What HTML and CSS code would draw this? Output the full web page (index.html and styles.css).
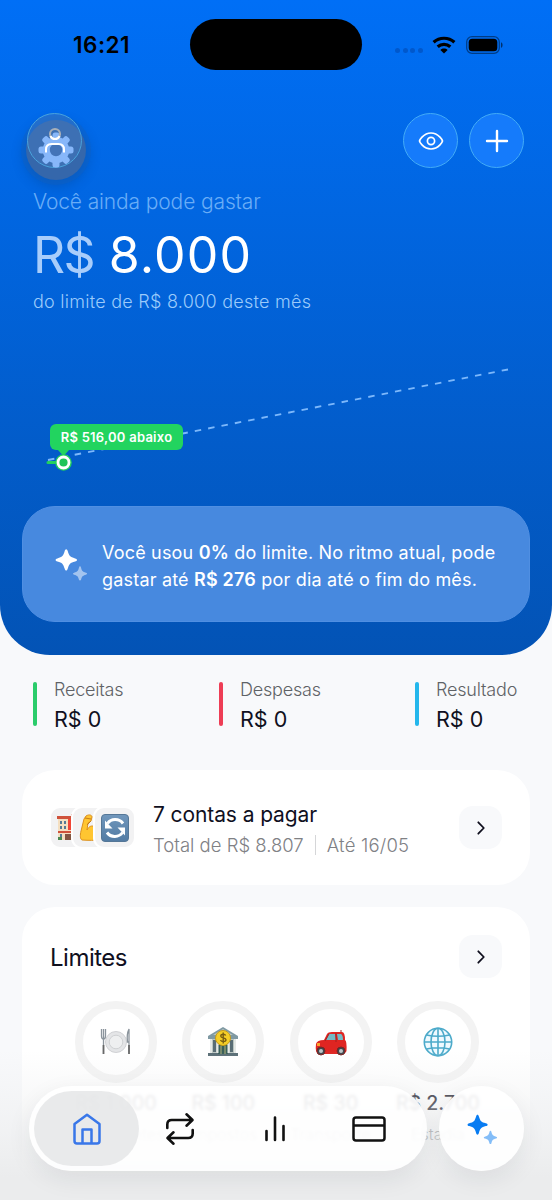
FILE: index.html
```
<!DOCTYPE html>
<html lang="pt-BR">
<head>
<meta charset="utf-8">
<meta name="viewport" content="width=device-width">
<title>Finanças</title>
<link rel="stylesheet" href="styles.css">
</head>
<body>
<svg width="0" height="0" class="defs">
  <symbol id="sparkles" viewBox="0 0 32 32"><path d="M11.2.8c.7 0 1.1.7 1.5 1.8 1.5 5 2.4 5.900 7.400 7.300 1.100.3 1.900.7 1.900 1.500s-.8 1.200-1.900 1.500c-5 1.400-5.900 2.300-7.400 7.400-.4 1.100-.8 1.800-1.500 1.800s-1.200-.7-1.500-1.800c-1.500-5.100-2.400-6-7.300-7.400C1.300 12.600.6 12.200.6 11.400s.7-1.200 1.800-1.500c4.900-1.400 5.800-2.300 7.300-7.300C10 1.500 10.500.8 11.200.8Z"/><path opacity=".5" d="M25 17.800c.5 0 .8.5 1 1.200.9 3.600 1.500 4.200 5 5.200.7.200 1.100.5 1.100 1s-.4.800-1.100 1c-3.500 1-4.100 1.600-5 5.100-.2.700-.5 1.100-1 1.100s-.8-.4-1-1.100c-.9-3.500-1.500-4.100-4.900-5.100-.7-.2-1.200-.5-1.200-1s.5-.8 1.200-1c3.400-1 4-1.600 4.900-5.200.2-.7.500-1.200 1-1.200Z"/></symbol>
  <symbol id="chevron" viewBox="0 0 16 16"><path d="M5.300 2.300 10.800 8l-5.500 5.700" fill="none" stroke="currentColor" stroke-width="1.800" stroke-linecap="round" stroke-linejoin="round"/></symbol>
</svg>
<main class="screen">
  <section class="hero">
    <div class="status">
      <span class="time">16:21</span>
      <span class="island"></span>
      <div class="signals">
        <span class="dots"><i></i><i></i><i></i><i></i></span>
        <svg class="wifi" viewBox="0 0 24 18"><g fill="none" stroke="#000" stroke-width="3.200"><path d="M1.600 6.300C7.500.9 16.500.9 22.400 6.300"/><path d="M5.700 10.800c3.600-3.300 9-3.300 12.600 0"/></g><path d="M8.400 13.900c2-1.900 5.200-1.900 7.200 0L12 17.600Z"/></svg>
        <svg class="battery" viewBox="0 0 38 18"><rect x=".7" y=".7" width="32.600" height="16.600" rx="5.300" fill="none" stroke="#000" stroke-opacity=".45" stroke-width="1.200"/><rect x="2.700" y="2.700" width="28.600" height="12.600" rx="3.500"/><path d="M35 6.200c2.100.7 2.100 4.900 0 5.600Z" fill-opacity=".55"/></svg>
      </div>
    </div>
    <div class="actions">
      <div class="profile">
        <span class="ghost"></span><span class="round dim"></span>
        <svg class="gear" viewBox="0 0 40 48">
          <g fill="#87b7fa"><circle cx="20" cy="28" r="13.200"/><rect x="16.500" y="10.500" width="7" height="35" rx="2.500"/><rect x="16.500" y="10.500" width="7" height="35" rx="2.500" transform="rotate(45 20 28)"/><rect x="16.500" y="10.500" width="7" height="35" rx="2.500" transform="rotate(90 20 28)"/><rect x="16.500" y="10.500" width="7" height="35" rx="2.500" transform="rotate(135 20 28)"/></g>
          <circle cx="20" cy="28" r="6.200" fill="#4474b8"/>
          <circle cx="19" cy="12" r="5" fill="none" stroke="#a8afb8" stroke-width="2.100"/>
          <path d="M14.400 14a5 5 0 0 0 9.200 0" fill="none" stroke="#fff" stroke-width="2"/>
          <path d="M10 30.500v-3q0-5.500 5.500-5.500h7q5.500 0 5.500 5.500v3" fill="none" stroke="#fff" stroke-width="2"/>
        </svg>
      </div>
      <div class="round"><svg width="26" height="20" viewBox="0 0 26 20" fill="none" stroke="#fff" stroke-width="1.700"><path d="M1.500 10Q2 8.200 4 6.100 8 2 13 2t9 4.100Q24 8.200 24.500 10 24 11.800 22 13.900 18 18 13 18t-9-4.100Q2 11.800 1.500 10Z"/><circle cx="13" cy="10" r="3.600"/></svg></div>
      <div class="round"><svg width="24" height="24" viewBox="0 0 24 24" fill="none" stroke="#fff" stroke-width="2.400" stroke-linecap="round"><path d="M12 2v20M2 12h20"/></svg></div>
    </div>
    <p class="lead">Você ainda pode gastar</p>
    <p class="amount"><span class="cur">R$</span> <span class="num">8.000</span></p>
    <p class="sub">do limite de R$ 8.000 deste mês</p>
    <div class="chart">
      <svg width="552" height="130" viewBox="0 350 552 130" fill="none">
        <path d="M48 460 508 369.500" stroke="#7db8fb" stroke-width="1.800" stroke-dasharray="6.500 7.100"/>
        <path d="M48 462.500h16" stroke="#22d15d" stroke-width="3" stroke-linecap="round"/>
        <path d="m57 449 6.500 7 6.500-7Z" fill="#22d45f"/>
        <circle cx="63.500" cy="462.500" r="8.300" fill="#22d15d"/><circle cx="63.500" cy="462.500" r="5.500" fill="#1fc459" stroke="#fff" stroke-width="2.800"/>
      </svg>
      <span class="tip">R$ 516,00 abaixo</span>
    </div>
    <div class="insight">
      <svg class="spark" viewBox="0 0 32 32" fill="#fff"><use href="#sparkles"/></svg>
      <p>Você usou <b>0%</b> do limite. No ritmo atual, pode<br>gastar até <b>R$ 276</b> por dia até o fim do mês.</p>
    </div>
  </section>

  <section class="stats">
    <div class="stat green"><span>Receitas</span><strong>R$ 0</strong></div>
    <div class="stat red"><span>Despesas</span><strong>R$ 0</strong></div>
    <div class="stat cyan"><span>Resultado</span><strong>R$ 0</strong></div>
  </section>

  <section class="card bills">
    <div class="stack">
      <div class="tile"><svg width="30" height="30" viewBox="0 0 30 30"><path fill="#f4dfc1" d="M2 6h15v21H2zM15 3h13v24H15z"/><path fill="#cf523b" d="M1 3h15v3H1zM2 18h15v2H2zM15 1h14v3H15z"/><path fill="#577a94" d="M4 8h2v3H4zM8 8h2v3H8zM4 13h2v3H4zM8 13h2v3H8zM4 21h2v3H4z"/><path fill="#f04636" d="M12 6h3v11h-3zM15 10h5v3h-5z"/><path fill="#825542" d="M9 21h6v6H9z"/><path fill="#4b8a51" d="M2 24h4v3H2z"/></svg></div>
      <div class="tile"><svg width="30" height="30" viewBox="0 0 30 30"><path d="M8 3c3-2 6-1 6 1l-1 4-3 2-1 7c2-4 5-5 8-3 6 1 10 4 10 9 0 4-9 5-23 4-2-1-2-5-1-9L6 6Z" fill="#ffc531" stroke="#dc901c"/><path d="m7 5 6 1M9 12l4-4" stroke="#c67b18" fill="none"/></svg></div>
      <div class="tile"><svg width="30" height="30" viewBox="0 0 30 30"><defs><linearGradient id="steel" x2="0" y2="1"><stop stop-color="#7197bc"/><stop offset="1" stop-color="#527ba3"/></linearGradient></defs><rect x="1.500" y="1.500" width="27" height="27" rx="3.500" fill="url(#steel)" stroke="#557797"/><path d="M7.500 10.500C11 5.500 19 5 23 10.500M22.500 19.500C19 24.500 11 25 7 19.500" fill="none" stroke="#fff" stroke-width="3"/><path d="M5 7.500v8h7.500ZM25 22.500v-8h-7.500Z" fill="#fff"/></svg></div>
    </div>
    <div class="bill-text"><h2>7 contas a pagar</h2><p><span>Total de R$ 8.807</span><i></i><span class="until">Até 16/05</span></p></div>
    <span class="go"><svg width="16" height="16"><use href="#chevron"/></svg></span>
  </section>

  <section class="card limits">
    <header><h2>Limites</h2><span class="go"><svg width="16" height="16"><use href="#chevron"/></svg></span></header>
    <div class="rings">
      <div class="limit"><div class="ring"><svg width="32" height="30" viewBox="0 0 32 30"><circle cx="16" cy="15" r="10.500" fill="#e4e5e7" stroke="#d0d1d4"/><circle cx="16" cy="15" r="6.800" fill="#eeeff0" stroke="#cfd1d3"/><path d="M1.500 2v7q0 3 2 3t2-3V2M3.500 2v25M29 27V2q-2.500 5-1.500 13H29" fill="none" stroke="#8b949c" stroke-width="1.300"/><path d="M3.500 18v9M29 18v9" stroke="#666" stroke-width="1.700"/></svg></div><b>R$ 1.000</b><span>Restaurantes</span></div>
      <div class="limit"><div class="ring"><svg width="32" height="30" viewBox="0 0 32 30"><path fill="#7f99a3" d="M16 0 31 9v3H1V9Z"/><path fill="#bac5c1" d="m16 2 10 6H6ZM3 12h26v14H3z"/><path fill="#596d75" d="M6 13h3v12H6zM23 13h3v12h-3zM1 26h30v3H1z"/><path fill="#385e58" d="M11 18h10v9H11z"/><path d="M14 19v8M18 19v8" stroke="#b5b37b"/><path d="M4 12v14M10.500 12v14M21.500 12v14M28 12v14" stroke="#e5e9e6" stroke-width="2"/><circle cx="16" cy="11" r="7.500" fill="#f5ce26" stroke="#c59b18"/><path d="M18.700 8.500c-1-2-5-1.500-5 .6 0 2.500 5.300 1.200 5.300 3.700 0 2.300-4.500 2.400-5.500.2M16.200 5.500v11" stroke="#785d11" stroke-width="1.400" fill="none"/></svg></div><b>R$ 100</b><span>Impostos</span></div>
      <div class="limit"><div class="ring"><svg width="32" height="30" viewBox="0 0 32 30"><path fill="#df2522" d="M1 17q1-4 8-4l3-6q1-2 5-2h10q3 0 3 8 2 1 1.500 11-1 3-5 3H3q-3-2-2-10Z"/><path fill="#74bac5" d="m11 13 3-6h6l1 6ZM22 7h4q2 1 2 6h-5Z"/><path d="m14 7-4 7M21 6v9M26 5V3" stroke="#a5211f"/><path fill="#faa32c" d="M2 16h3v3H2z"/><g fill="#3f454b" stroke="#7a2321"><circle cx="6" cy="24" r="4"/><circle cx="26" cy="24" r="4"/></g><g fill="#bec7ca"><circle cx="6" cy="24" r="2"/><circle cx="26" cy="24" r="2"/></g></svg></div><b>R$ 30</b><span>Transporte</span></div>
      <div class="limit"><div class="ring"><svg width="32" height="32" viewBox="0 0 32 32" fill="none" stroke="#4caaca" stroke-width="1.600"><circle cx="16" cy="16" r="13.700" fill="#effaff"/><ellipse cx="16" cy="16" rx="7" ry="13.700"/><path d="M16 2v28M2 16h28M4.500 9q11.500 2.500 23 0M4.500 23q11.500-2.500 23 0"/></svg></div><b>R$ 2.700</b><span>Estadia</span></div>
    </div>
  </section>

  <div class="fade"></div>
  <nav class="dock">
    <div class="tabs">
      <a class="tab active"><svg width="30" height="32" viewBox="0 0 30 32" fill="none" stroke="#3977e9" stroke-width="2.500" stroke-linejoin="round"><path d="M15 1.800 27.500 11v17q0 2.500-2.500 2.500H5Q2.500 30.500 2.500 28V11Z"/><path d="M10.500 30V16.500h9V30"/></svg></a>
      <a class="tab"><svg width="30" height="34" viewBox="0 0 30 34" fill="none" stroke="#111" stroke-width="2.600" stroke-linecap="round" stroke-linejoin="round"><path d="M2.300 16v-3.500q0-4.500 4.500-4.500H27M21.500 2.300 27.500 8l-6 5.700M27.700 18v3.500q0 4.500-4.500 4.500H3M8.500 20.300 2.500 26l6 5.700"/></svg></a>
      <a class="tab"><svg width="24" height="28" viewBox="0 0 24 28" fill="none" stroke="#111" stroke-width="2.600" stroke-linecap="round"><path d="M3.500 16v9M12 2.500V25M20.500 11v14"/></svg></a>
      <a class="tab"><svg width="34" height="26" viewBox="0 0 34 26" fill="none" stroke="#111" stroke-width="2.500"><rect x="1.500" y="1.500" width="31" height="23" rx="2.500"/><path d="M2 9.500h30"/></svg></a>
    </div>
    <a class="assistant"><svg width="30" height="30" viewBox="0 0 32 32" fill="#087cf2"><use href="#sparkles"/></svg></a>
  </nav>
</main>
</body>
</html>
```

FILE: styles.css
```
* { box-sizing: border-box; }
body, p, h2 { margin: 0; }
body { width: 552px; height: 1200px; overflow: hidden; background: #f8f9fb; font-family: Inter, "Liberation Sans", sans-serif; color: #10101e; }
svg { display: block; flex: none; }
.defs { position: absolute; }
.screen { position: relative; height: 1200px; overflow: hidden; }
.hero { height: 655px; border-radius: 0 0 50px 50px; background: linear-gradient(#006ff6, #0353b5); overflow: hidden; }
.status { display: grid; grid-template-columns: 190px 172px 190px; height: 113px; padding-top: 19px; }
.time { padding: 13px 0 0 73px; color: #000; font-size: 22.5px; line-height: 26px; font-weight: 600; letter-spacing: .5px; }
.island { height: 51px; border-radius: 26px; background: #000; }
.signals { display: flex; align-items: center; height: 51px; padding-left: 33px; }
.dots { display: flex; gap: 2.500px; width: 36px; padding-top: 12px; }
.dots i { width: 5px; height: 5px; border-radius: 50%; background: #0058cc; }
.wifi { width: 24px; height: 18px; margin-left: 1px; }
.battery { width: 38px; height: 18px; margin-left: 10px; }
.actions { display: flex; gap: 11px; height: 74px; padding: 0 28px 0 22px; }
.round { display: flex; align-items: center; justify-content: center; width: 55px; height: 55px; border-radius: 50%; background: #157bfb; border: 1px solid #43acf7; }
.profile { position: relative; width: 68px; margin-right: auto; }
.ghost { position: absolute; left: 4px; top: 7px; width: 60px; height: 60px; border-radius: 50%; background: #3567ab; box-shadow: 0 0 0 5px #1561be66, 0 4px 12px 3px #073d8450; }
.dim { position: absolute; left: 5px; top: 0; background: #4a80c366; border-color: #4aa3dc; }
.gear { position: absolute; left: 14px; top: 9px; width: 40px; height: 48px; }
.lead { height: 38px; padding-left: 33px; font-size: 21px; line-height: 30px; font-weight: 300; letter-spacing: -.13px; color: #69adf7; }
.amount { display: flex; gap: 15px; height: 64px; padding-left: 33px; font-size: 50px; line-height: 61px; font-weight: 400; color: #fff; }
.cur { letter-spacing: -1.800px; color: #a8cdfb; }
.num { letter-spacing: 1.200px; }
.sub { height: 61px; padding-left: 33px; font-size: 18px; line-height: 26px; font-weight: 300; letter-spacing: .26px; color: #9ccbfb; }
.chart { position: relative; height: 130px; }
.tip { position: absolute; left: 50px; top: 74px; width: 133px; height: 26px; border-radius: 6px; background: #22d45f; color: #fff; font-size: 13px; line-height: 27px; font-weight: 600; letter-spacing: .25px; text-align: center; white-space: nowrap; }
.insight { display: flex; gap: 15px; width: 508px; height: 116px; margin: 26px 22px 0; padding: 32px 0 0 32px; border-radius: 33px; background: #4789df; border: 1px solid #508fe2; color: #fff; font-size: 18px; line-height: 27px; letter-spacing: .19px; white-space: nowrap; }
.spark { width: 32px; height: 33px; margin-top: 9px; }
.insight b { font-weight: 600; }
.stats { display: flex; height: 116px; padding: 23px 0 0 33px; }
.stat { position: relative; flex: none; width: 186px; padding-left: 21px; white-space: nowrap; }
.stat:nth-child(2) { width: 196px; }
.stat:nth-child(3) { width: 137px; }
.stat::before { content: ""; position: absolute; left: 0; top: 4px; width: 4px; height: 44px; border-radius: 2px; background: currentColor; }
.stat span, .stat strong { display: block; }
.stat span { color: #5f6266; font-size: 18px; line-height: 24px; font-weight: 300; letter-spacing: -.2px; }
.stat strong { margin-top: 2px; color: #10101e; font-size: 21.500px; line-height: 30px; font-weight: 400; }
.green { color: #2bcc6b; } .red { color: #ee3d55; } .cyan { color: #24b7ec; }
.card { width: 508px; margin: 0 22px; border-radius: 33px; background: #fff; }
.bills { display: flex; height: 115px; margin-top: -1px; padding: 0 28px 0 27px; align-items: center; white-space: nowrap; }
.stack { display: flex; width: 104px; }
.tile { display: flex; align-items: center; justify-content: center; width: 43px; height: 43px; margin-right: -21px; border: 2px solid #fff; border-radius: 11px; background: #f2f2f3; flex: none; }
.bill-text { flex: 1; padding-top: 4px; }
.bill-text h2 { font-size: 21px; line-height: 31px; font-weight: 400; letter-spacing: -.1px; }
.bill-text p { display: flex; align-items: center; height: 31px; color: #808185; font-size: 18.500px; font-weight: 300; }
.bill-text i { width: 1px; height: 20px; margin: 0 11px; background: #d5d6d8; }
.until { letter-spacing: .2px; }
.go { display: flex; align-items: center; justify-content: center; width: 43px; height: 43px; border-radius: 14px; background: #f8f9fb; color: #10101e; flex: none; }
.limits { height: 320px; margin-top: 22px; padding: 28px 28px; }
.limits header { display: flex; justify-content: space-between; height: 66px; }
.limits h2 { font-size: 24px; line-height: 46px; font-weight: 400; letter-spacing: -.5px; }
.rings { display: flex; gap: 25.300px; padding-left: 25px; width: 480px; }
.limit { width: 82px; flex: none; display: flex; flex-direction: column; align-items: center; white-space: nowrap; }
.ring { display: flex; align-items: center; justify-content: center; width: 82px; height: 82px; border: 8px solid #f3f3f3; border-radius: 50%; }
.limit b { margin-top: 7px; font-size: 19.500px; line-height: 27px; font-weight: 500; }
.limit span { margin-top: 7px; color: #808185; font-size: 16px; line-height: 20px; font-weight: 300; }
.fade { position: absolute; inset: 1050px 0 0; background: linear-gradient(#efeff000, #ecedee99 55%, #ebeced 85%); }
.dock { position: absolute; left: 29px; right: 28px; top: 1086px; height: 85px; display: flex; gap: 12px; }
.tabs, .assistant { background: #ffffffe3; backdrop-filter: blur(1.500px); box-shadow: 0 8px 24px #1c253014; }
.tabs { display: flex; width: 398px; padding: 5px; border-radius: 43px; }
.tab { display: flex; align-items: center; justify-content: center; flex: none; width: 94.500px; }
.tab.active { width: 105px; height: 75px; margin-right: -6px; border-radius: 38px; background: #e5e6e8d9; }
.assistant { display: flex; align-items: center; justify-content: center; width: 85px; border-radius: 50%; }
```
